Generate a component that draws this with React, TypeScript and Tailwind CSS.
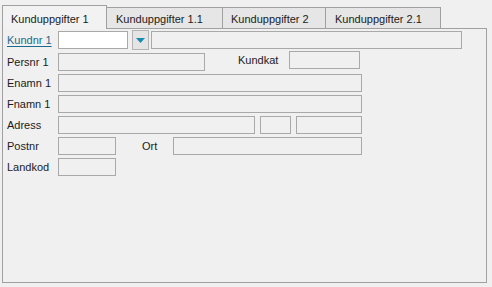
import React from "react";

const box = "h-[18px] border border-[#a9a9a9] bg-[#f0f0f0] shrink-0";

function Label({ children, w = "w-[51px]" }: { children: React.ReactNode; w?: string }) {
  return <div className={`${w} shrink-0 text-[11px] leading-[13px] text-[#1b1b1b]`}>{children}</div>;
}

export default function App() {
  return (
    <div
      className="w-[492px] h-[287px] bg-[#f0f0f0] overflow-hidden"
      style={{ fontFamily: '"Liberation Sans", Arial, sans-serif' }}
    >
      <div className="pt-[5px]">
        <div className="relative z-10 flex items-end h-[24px] ml-[2px] text-[11px] text-[#1b1b1b]">
          <div className="relative z-20 w-[105px] h-[24px] border border-b-0 border-[#a0a0a0] bg-[#f2f2f2] pl-[8px] pt-[5px]">
            Kunduppgifter 1
          </div>
          <div className="-ml-px w-[117px] h-[22px] border border-[#a0a0a0] bg-[#e6e6e6] pl-[9px] pt-[3px]">
            Kunduppgifter 1.1
          </div>
          <div className="-ml-px w-[104px] h-[22px] border border-[#a0a0a0] bg-[#e6e6e6] pl-[8px] pt-[3px]">
            Kunduppgifter 2
          </div>
          <div className="-ml-px w-[116px] h-[22px] border border-[#a0a0a0] bg-[#e6e6e6] pl-[9px] pt-[3px]">
            Kunduppgifter 2.1
          </div>
        </div>
        <div className="-mt-px ml-[2px] w-[485px] h-[255px] border border-[#a0a0a0] bg-[#f0f0f0] pl-[4px]">
          {/* Row 1 */}
          <div className="flex items-center h-[20px] mt-[1px]">
            <Label>
              <span className="text-[#1a6a8e] underline underline-offset-2">Kundnr 1</span>
            </Label>
            <div className="w-[70px] h-[18px] border border-[#a9a9a9] bg-white shrink-0" />
            <div className="ml-[4px] w-[17px] h-[20px] border border-[#b4b4b4] bg-[#e4e4e4] flex items-center justify-center shrink-0">
              <svg width="9" height="5" viewBox="0 0 9 5">
                <polygon points="0,0 9,0 4.5,5" fill="#1a8bb0" />
              </svg>
            </div>
            <div className={`${box} ml-[2px] w-[311px]`} />
          </div>
          {/* Row 2 */}
          <div className="flex h-[20px] mt-[1px]">
            <div className="flex items-center self-end h-[18px]">
              <Label>Persnr 1</Label>
            </div>
            <div className={`${box} self-end w-[147px]`} />
            <div className="flex items-center self-start h-[18px] ml-[33px]">
              <Label w="w-[51px]">Kundkat</Label>
            </div>
            <div className={`${box} self-start w-[71px]`} />
          </div>
          {/* Row 3 */}
          <div className="flex items-center h-[18px] mt-[3px]">
            <Label>Enamn 1</Label>
            <div className={`${box} w-[304px]`} />
          </div>
          {/* Row 4 */}
          <div className="flex items-center h-[18px] mt-[3px]">
            <Label>Fnamn 1</Label>
            <div className={`${box} w-[304px]`} />
          </div>
          {/* Row 5 */}
          <div className="flex items-center h-[18px] mt-[3px]">
            <Label>Adress</Label>
            <div className={`${box} w-[197px]`} />
            <div className={`${box} ml-[5px] w-[31px]`} />
            <div className={`${box} ml-[5px] w-[66px]`} />
          </div>
          {/* Row 6 */}
          <div className="flex items-center h-[18px] mt-[3px]">
            <Label>Postnr</Label>
            <div className={`${box} w-[58px]`} />
            <div className="ml-[26px] w-[31px] shrink-0 text-[11px] text-[#1b1b1b]">Ort</div>
            <div className={`${box} w-[189px]`} />
          </div>
          {/* Row 7 */}
          <div className="flex items-center h-[18px] mt-[3px]">
            <Label>Landkod</Label>
            <div className={`${box} w-[58px]`} />
          </div>
        </div>
      </div>
    </div>
  );
}
